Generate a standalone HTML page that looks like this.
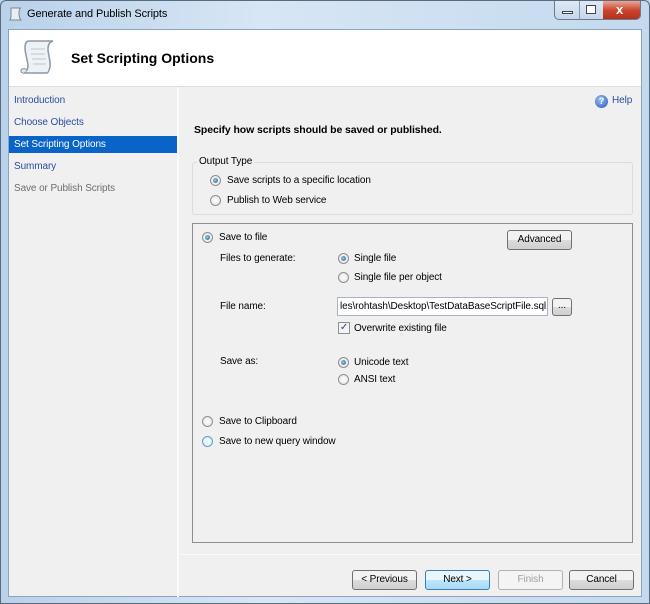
<!DOCTYPE html>
<html><head><style>
*{margin:0;padding:0;box-sizing:border-box}
body{width:650px;height:604px;overflow:hidden;font-family:"Liberation Sans",sans-serif;font-size:10px;letter-spacing:-0.1px;color:#000;background:#bcd3ea;position:relative}
.a{position:absolute;white-space:nowrap}
.frame{position:absolute;left:0;top:0;width:650px;height:604px;background:linear-gradient(90deg,#b9d1ea,#d7e6f5 40%,#c4d9ee);border:1px solid #5a6b7e;border-radius:6px 6px 0 0}
.client{position:absolute;left:8px;top:29px;width:634px;height:568px;background:#f0f0f0;border:1px solid #8da2bb}
.radio{position:absolute;width:11px;height:11px;border-radius:50%;border:1px solid #8f8f8f;background:radial-gradient(circle,#fff,#e0e0e0)}
.radio.on::after{content:"";position:absolute;left:2px;top:2px;width:5px;height:5px;border-radius:50%;background:radial-gradient(circle at 40% 40%,#9cd,#1b5d8a)}
.btn{position:absolute;height:20px;border:1px solid #707070;border-radius:3px;background:linear-gradient(#f2f2f2 50%,#dcdcdc 50%,#cfcfcf);text-align:center;line-height:18px;font-size:10px}
</style></head><body>
<div class="frame"></div>
<svg class="a" style="left:7px;top:6px" width="16" height="16" viewBox="0 0 16 16"><path d="M4 2h10c-2 0-2 3-2 5s0 5 2 7H3c1-1 1-3 1-5S4 4 4 2z" fill="#e8eef4" stroke="#7a8796"/></svg>
<div class="a" style="left:27px;top:8px;font-size:11px">Generate and Publish Scripts</div>
<div class="a" style="left:554px;top:1px;width:87px;height:19px;border:1px solid #6a7b90;border-top:none;border-radius:0 0 5px 5px;background:linear-gradient(#dfe9f5,#c4d6eb);overflow:hidden">
<div class="a" style="left:24px;top:0;width:1px;height:19px;background:#8899aa"></div>
<div class="a" style="left:48px;top:0;width:39px;height:19px;background:linear-gradient(#e9a898,#c9432c 50%,#b52f18)"></div>
<div class="a" style="left:7px;top:10px;width:11px;height:3px;border:1px solid #445;background:#fff"></div>
<div class="a" style="left:31px;top:4px;width:10px;height:9px;border:1px solid #445;background:#fff"></div>
<div class="a" style="left:61px;top:1px;color:#fff;font-weight:bold;font-size:13px">x</div>
</div>
<div class="client">
 <div class="a" style="left:0;top:0;width:632px;height:57px;background:#fff;border-bottom:1px solid #ddd"></div>
 <svg class="a" style="left:8px;top:7px" width="42" height="42" viewBox="0 0 42 42"><path d="M12 4h24c-4 1-5 4-5 8 0 6 3 12 2 18-1 4-2 6-3 6H6c3-1 5-3 5-7 0-5-3-12-3-18 0-4 1-7 4-7z" fill="#eef2f6" stroke="#8b98a6" stroke-width="1.5"/><path d="M14 12h14M14 17h14M15 22h14M16 27h13" stroke="#b8c4d0"/><path d="M6 36c-2 0-3-3-1-4 2-1 5 0 5 2" fill="#dde4ec" stroke="#8b98a6"/></svg>
 <div class="a" style="left:62px;top:20px;font-size:14px;font-weight:bold;letter-spacing:0">Set Scripting Options</div>
 <div class="a" style="left:168px;top:57px;width:2px;height:510px;background:#fafafa"></div>
 <div class="a" style="left:5px;top:65px;color:#2a4da0">Introduction</div>
 <div class="a" style="left:5px;top:87px;color:#2a4da0">Choose Objects</div>
 <div class="a" style="left:0;top:106px;width:168px;height:17px;background:#0a64c8"></div>
 <div class="a" style="left:5px;top:109px;color:#fff">Set Scripting Options</div>
 <div class="a" style="left:5px;top:131px;color:#2a4da0">Summary</div>
 <div class="a" style="left:5px;top:153px;color:#6d6d6d">Save or Publish Scripts</div>
 <div class="a" style="left:586px;top:65px;width:13px;height:13px;border-radius:50%;background:radial-gradient(circle at 40% 35%,#9bc0f0,#2556b8);color:#fff;font-size:9px;font-weight:bold;text-align:center;line-height:13px">?</div>
 <div class="a" style="left:603px;top:65px;color:#2a4da0">Help</div>
 <div class="a" style="left:185px;top:94px;font-weight:bold;font-size:10.5px">Specify how scripts should be saved or published.</div>
 <div class="a" style="left:183px;top:132px;width:441px;height:53px;border:1px solid #dcdcdc;border-radius:3px"></div>
 <div class="a" style="left:188px;top:126px;background:#f0f0f0;padding:0 2px">Output Type</div>
 <div class="radio on" style="left:201px;top:145px"></div>
 <div class="a" style="left:218px;top:145px">Save scripts to a specific location</div>
 <div class="radio" style="left:201px;top:165px"></div>
 <div class="a" style="left:218px;top:165px">Publish to Web service</div>
 <div class="a" style="left:183px;top:193px;width:441px;height:320px;border:1px solid #8e8e8e"></div>
 <div class="radio on" style="left:193px;top:202px"></div>
 <div class="a" style="left:210px;top:202px">Save to file</div>
 <div class="btn" style="left:498px;top:200px;width:65px">Advanced</div>
 <div class="a" style="left:211px;top:223px">Files to generate:</div>
 <div class="radio on" style="left:329px;top:223px"></div>
 <div class="a" style="left:345px;top:223px">Single file</div>
 <div class="radio" style="left:329px;top:242px"></div>
 <div class="a" style="left:345px;top:242px">Single file per object</div>
 <div class="a" style="left:211px;top:271px">File name:</div>
 <div class="a" style="left:328px;top:267px;width:211px;height:19px;background:#fff;border:1px solid #a8b4c4;padding:3px 2px;overflow:hidden">les\rohtash\Desktop\TestDataBaseScriptFile.sql</div>
 <div class="btn" style="left:543px;top:268px;width:20px;height:18px;line-height:14px">...</div>
 <div class="a" style="left:329px;top:292px;width:12px;height:12px;border:1px solid #8f8f8f;background:#f4f4f4;color:#23438a;font-size:10px;line-height:10px;text-align:center">✓</div>
 <div class="a" style="left:345px;top:293px">Overwrite existing file</div>
 <div class="a" style="left:211px;top:326px">Save as:</div>
 <div class="radio on" style="left:329px;top:327px"></div>
 <div class="a" style="left:345px;top:327px">Unicode text</div>
 <div class="radio" style="left:329px;top:344px"></div>
 <div class="a" style="left:345px;top:344px">ANSI text</div>
 <div class="radio" style="left:193px;top:386px"></div>
 <div class="a" style="left:210px;top:386px">Save to Clipboard</div>
 <div class="radio" style="left:193px;top:406px;border-color:#5aa0d0;background:radial-gradient(circle,#fff,#cfe6f7)"></div>
 <div class="a" style="left:210px;top:406px">Save to new query window</div>
 <div class="a" style="left:170px;top:524px;width:462px;height:1px;background:#fafafa"></div>
 <div class="btn" style="left:343px;top:540px;width:65px">&lt; Previous</div>
 <div class="btn" style="left:416px;top:540px;width:65px;border-color:#3c7fb1;background:linear-gradient(#eaf6fd 50%,#bee6fd 50%,#a7d9f5)">Next &gt;</div>
 <div class="btn" style="left:489px;top:540px;width:65px;border-color:#adb2b5;background:#f4f4f4;color:#a0a0a0">Finish</div>
 <div class="btn" style="left:560px;top:540px;width:65px">Cancel</div>
</div>
</body></html>
